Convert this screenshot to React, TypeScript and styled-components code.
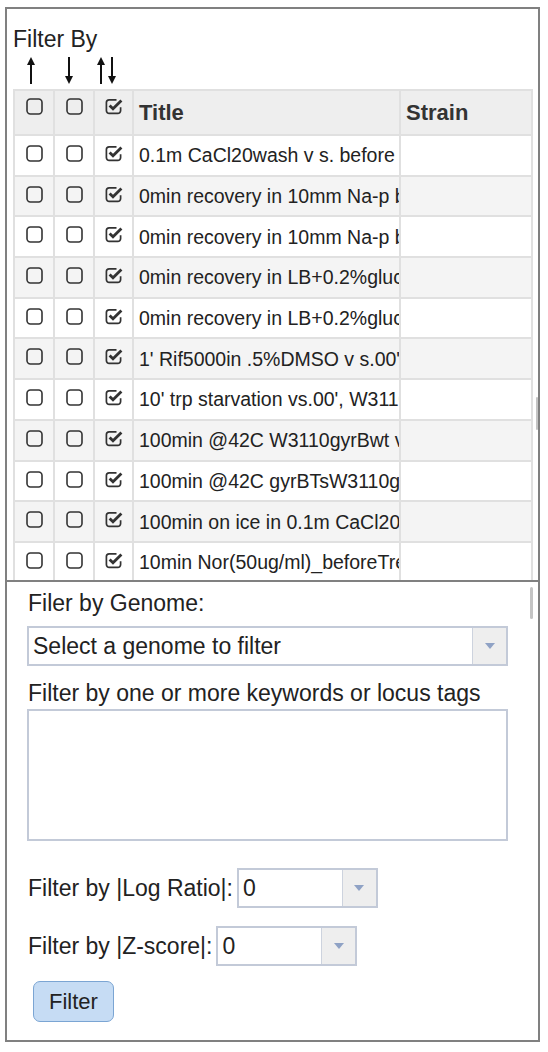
import React from "react";
import styled, { createGlobalStyle } from "styled-components";

const GlobalStyle = createGlobalStyle`
  body {
    margin: 0;
    background: #fff;
    color: #222;
    font-family: "Liberation Sans", Arial, Helvetica, sans-serif;
  }
`;

const Frame = styled.div`
  box-sizing: border-box;
  width: 535px;
  height: 1035px;
  margin: 7px 0 0 5px;
  border: 2px solid #808080;
  display: flex;
  flex-direction: column;
`;

const TopPanel = styled.div`
  position: relative;
  flex: none;
  height: 571px;
  overflow: hidden;
  padding: 0 5px 0 6px;
`;

const Heading = styled.div`
  margin-top: 17px;
  font-size: 23px;
  line-height: 26px;
`;

const ArrowRow = styled.div`
  box-sizing: border-box;
  display: flex;
  height: 37px;
  padding-top: 5px;
`;

const ArrowCell = styled.div`
  width: 38px;
  display: flex;
  justify-content: center;
  &:first-child {
    margin-left: -1px;
  }
`;

const Grid = styled.table`
  width: 520px;
  table-layout: fixed;
  border-collapse: collapse;
`;

const HeadRow = styled.tr`
  height: 45px;
  background: #eeeeee;
`;

const BodyRow = styled.tr<{ $odd: boolean }>`
  height: 40.7px;
  background: ${(p) => (p.$odd ? "#f4f4f4" : "#ffffff")};
`;

const CheckCell = styled.td<{ $top: number }>`
  border: 2px solid #e0e0e0;
  padding: ${(p) => p.$top}px 0 0;
  text-align: center;
  vertical-align: top;
  line-height: 0;
`;

const HeadText = styled.th`
  border: 2px solid #e0e0e0;
  padding: 0 0 0 5px;
  text-align: left;
  font-size: 22px;
  font-weight: bold;
  color: #333;
  white-space: nowrap;
  overflow: hidden;
`;

const TextCell = styled.td`
  border: 2px solid #e0e0e0;
  padding: 1px 0 0 5px;
  font-size: 19.5px;
  color: #222;
  white-space: nowrap;
  overflow: hidden;
`;

const ScrollThumb = styled.div<{ $top: number; $right: number; $height: number; $width: number }>`
  position: absolute;
  top: ${(p) => p.$top}px;
  right: ${(p) => p.$right}px;
  width: ${(p) => p.$width}px;
  height: ${(p) => p.$height}px;
  background: #c4c4c4;
  border-radius: 2px;
`;

const BottomPanel = styled.div`
  position: relative;
  flex: 1;
  border-top: 2px solid #808080;
  padding: 8px 0 0 20px;
`;

const Label = styled.div<{ $top: number }>`
  margin-top: ${(p) => p.$top}px;
  padding-left: 1px;
  font-size: 23px;
  line-height: 26px;
  color: #222;
  white-space: nowrap;
`;

const SelectBox = styled.div<{ $width: number; $top?: number }>`
  box-sizing: border-box;
  display: flex;
  width: ${(p) => p.$width}px;
  height: 40px;
  margin-top: ${(p) => p.$top ?? 0}px;
  border: 2px solid #c3cad8;
  background: #fff;
`;

const SelectValue = styled.div`
  flex: 1;
  padding-left: 4px;
  font-size: 23px;
  line-height: 36px;
  color: #222;
  white-space: nowrap;
`;

const SelectArrow = styled.div`
  width: 33px;
  background: #eeeeee;
  border-left: 1px solid #cdd3de;
  display: flex;
  align-items: center;
  justify-content: center;
  &::after {
    content: "";
    border-left: 5px solid transparent;
    border-right: 5px solid transparent;
    border-top: 6px solid #8fa2c5;
  }
`;

const Keywords = styled.textarea`
  display: block;
  box-sizing: border-box;
  width: 481px;
  height: 132px;
  margin-top: 3px;
  border: 2px solid #c3cad8;
  resize: none;
  outline: none;
  font-family: inherit;
`;

const FilterRow = styled.div<{ $top: number }>`
  display: flex;
  align-items: center;
  gap: 4px;
  margin-top: ${(p) => p.$top}px;
`;

const FilterButton = styled.button`
  box-sizing: border-box;
  display: block;
  width: 81px;
  height: 41px;
  margin: 15px 0 0 6px;
  padding: 0;
  background: #c6dcf4;
  border: 1.5px solid #7ba5d3;
  border-radius: 7px;
  font-family: inherit;
  font-size: 22px;
  color: #222;
`;

const Box = ({ checked }: { checked: boolean }) =>
  checked ? (
    <svg width="18" height="17" viewBox="0 0 18 17">
      <path
        d="M11.5 1.8H4.2a2.8 2.8 0 0 0-2.8 2.8v8a2.8 2.8 0 0 0 2.8 2.8h8.6a2.8 2.8 0 0 0 2.8-2.8V9.3"
        fill="none"
        stroke="#333"
        strokeWidth="1.7"
      />
      <path d="M4.6 7.4l3.4 3.4L16.4 2.4" fill="none" stroke="#333" strokeWidth="2.8" />
    </svg>
  ) : (
    <svg width="17" height="17" viewBox="0 0 17 17">
      <rect x="1" y="1" width="15" height="15" rx="3.4" fill="none" stroke="#333" strokeWidth="1.6" />
    </svg>
  );

const Up = ({ x = 5 }: { x?: number }) => (
  <g>
    <line x1={x} y1="6" x2={x} y2="27" stroke="#111" strokeWidth="2" />
    <path d={`M${x} 0L${x + 4} 8H${x - 4}Z`} fill="#111" />
  </g>
);

const Down = ({ x = 5 }: { x?: number }) => (
  <g>
    <line x1={x} y1="0" x2={x} y2="21" stroke="#111" strokeWidth="2" />
    <path d={`M${x} 27L${x + 4} 19H${x - 4}Z`} fill="#111" />
  </g>
);

const rows = [
  "0.1m CaCl20wash v s. before wash",
  "0min recovery in 10mm Na-p buffer",
  "0min recovery in 10mm Na-p buffer",
  "0min recovery in LB+0.2%glucose",
  "0min recovery in LB+0.2%glucose",
  "1' Rif5000in .5%DMSO v s.00', W3110",
  "10' trp starvation vs.00', W3110",
  "100min @42C W3110gyrBwt vs. 0min",
  "100min @42C gyrBTsW3110gyrB",
  "100min on ice in 0.1m CaCl20",
  "10min Nor(50ug/ml)_beforeTreatment",
];

const App = () => {
  return (
    <>
      <GlobalStyle />
      <Frame>
        <TopPanel>
          <Heading>Filter By</Heading>
          <ArrowRow>
            <ArrowCell>
              <svg width="10" height="27">
                <Up />
              </svg>
            </ArrowCell>
            <ArrowCell>
              <svg width="10" height="27">
                <Down />
              </svg>
            </ArrowCell>
            <ArrowCell>
              <svg width="20" height="27">
                <Up x={4} />
                <Down x={15} />
              </svg>
            </ArrowCell>
          </ArrowRow>
          <Grid>
            <colgroup>
              <col style={{ width: 40 }} />
              <col style={{ width: 40 }} />
              <col style={{ width: 39 }} />
              <col style={{ width: 267 }} />
              <col />
            </colgroup>
            <thead>
              <HeadRow>
                <CheckCell as="th" $top={7}>
                  <Box checked={false} />
                </CheckCell>
                <CheckCell as="th" $top={7}>
                  <Box checked={false} />
                </CheckCell>
                <CheckCell as="th" $top={7}>
                  <Box checked />
                </CheckCell>
                <HeadText>Title</HeadText>
                <HeadText>Strain</HeadText>
              </HeadRow>
            </thead>
            <tbody>
              {rows.map((title, i) => (
                <BodyRow key={i} $odd={i % 2 === 1}>
                  <CheckCell $top={9}>
                    <Box checked={false} />
                  </CheckCell>
                  <CheckCell $top={9}>
                    <Box checked={false} />
                  </CheckCell>
                  <CheckCell $top={9}>
                    <Box checked />
                  </CheckCell>
                  <TextCell>{title}</TextCell>
                  <TextCell />
                </BodyRow>
              ))}
            </tbody>
          </Grid>
          <ScrollThumb $top={388} $right={0} $width={2} $height={33} />
        </TopPanel>

        <BottomPanel>
          <Label $top={0}>Filer by Genome:</Label>
          <SelectBox $width={481} $top={10}>
            <SelectValue>Select a genome to filter</SelectValue>
            <SelectArrow />
          </SelectBox>
          <Label $top={14}>Filter by one or more keywords or locus tags</Label>
          <Keywords />
          <FilterRow $top={27}>
            <Label $top={0}>Filter by |Log Ratio|:</Label>
            <SelectBox $width={141}>
              <SelectValue>0</SelectValue>
              <SelectArrow />
            </SelectBox>
          </FilterRow>
          <FilterRow $top={18}>
            <Label $top={0}>Filter by |Z-score|:</Label>
            <SelectBox $width={141}>
              <SelectValue>0</SelectValue>
              <SelectArrow />
            </SelectBox>
          </FilterRow>
          <FilterButton>Filter</FilterButton>
          <ScrollThumb $top={5} $right={5} $width={3} $height={32} />
        </BottomPanel>
      </Frame>
    </>
  );
};

export default App;
